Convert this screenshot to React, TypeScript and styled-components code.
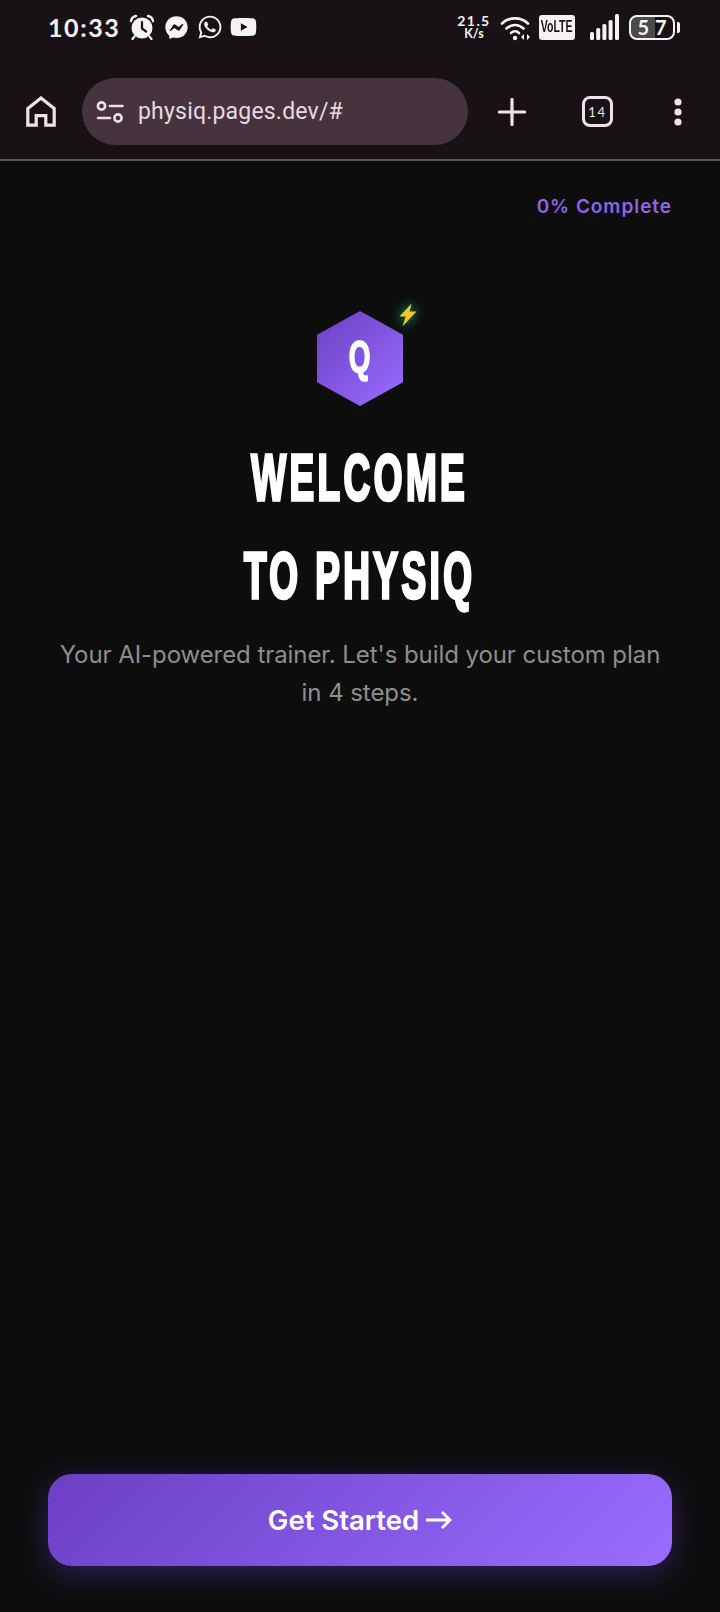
import React from 'react';
import styled, { createGlobalStyle } from 'styled-components';
import { FaFacebookMessenger, FaWhatsapp, FaYoutube } from 'react-icons/fa';

const Global = createGlobalStyle`
  html, body { margin: 0; padding: 0; background: #0d0d0d; }
  * { box-sizing: border-box; }
`;

const Page = styled.div`
  width: 720px;
  height: 1612px;
  display: flex;
  flex-direction: column;
  background: #0d0d0d;
  font-family: Inter, "Liberation Sans", sans-serif;
  overflow: hidden;
`;

const Chrome = styled.header`
  height: 161px;
  flex: none;
  background: #181216;
  border-bottom: 2px solid #5d5159;
  display: flex;
  flex-direction: column;
`;

const StatusBar = styled.div`
  height: 78px;
  padding: 13px 40px 0 48px;
  display: flex;
  align-items: flex-start;
  justify-content: space-between;
  color: #f5f2f4;
`;

const StatusGroup = styled.div`
  display: flex;
  align-items: center;
  height: 28px;
`;

const Time = styled.span`
  font-family: "Lato", sans-serif;
  font-weight: 700;
  font-size: 25px;
  letter-spacing: 1.6px;
  width: 81px;
  line-height: 28px;
`;

const NotifSlot = styled.span<{ $w: number }>`
  width: ${p => p.$w}px;
  display: flex;
  align-items: center;
  color: #f5f2f4;
`;

const Speed = styled.span`
  width: 40px;
  margin-left: -6px;
  margin-right: 6px;
  font-family: "Lato", sans-serif;
  font-weight: 700;
  font-size: 14px;
  line-height: 13px;
  text-align: center;
  letter-spacing: 1.4px;
  display: flex;
  flex-direction: column;
`;

const SpeedUnit = styled.span`
  font-size: 12.5px;
  letter-spacing: 0;
`;

const Volte = styled.span`
  width: 36px;
  height: 25px;
  background: #f5f2f4;
  color: #181216;
  border-radius: 3px;
  display: flex;
  align-items: center;
  justify-content: center;
  overflow: hidden;
`;

const VolteText = styled.span`
  display: inline-block;
  font-family: "Liberation Sans", sans-serif;
  font-weight: 700;
  font-size: 17px;
  transform: scaleX(0.62);
  letter-spacing: 0;
`;

const Battery = styled.span`
  position: relative;
  width: 46px;
  height: 25px;
  border: 2px solid #f5f2f4;
  border-radius: 8px;
  display: flex;
  align-items: center;
  justify-content: center;
  overflow: hidden;
  font-family: "Lato", sans-serif;
  font-weight: 700;
  font-size: 20px;
  letter-spacing: 6px;
  padding-left: 6px;
  background: linear-gradient(90deg, #4a4a4a 0 57%, transparent 57%);
`;

const BatteryCap = styled.span`
  width: 3px;
  height: 11px;
  margin-left: 2px;
  background: #f5f2f4;
  border-radius: 0 2px 2px 0;
`;

const Toolbar = styled.div`
  height: 67px;
  display: flex;
  align-items: center;
  padding-left: 26px;
`;

const Pill = styled.div`
  width: 386px;
  height: 67px;
  margin-left: 26px;
  border-radius: 34px;
  background: #46333e;
  display: flex;
  align-items: center;
  padding-left: 14px;
  gap: 14px;
  color: #e9dfe5;
`;

const Url = styled.span`
  font-family: "Roboto", sans-serif;
  font-size: 23px;
  letter-spacing: 0.2px;
  color: #e6dbe2;
`;

const ToolSlot = styled.div<{ $ml: number; $w: number }>`
  margin-left: ${p => p.$ml}px;
  width: ${p => p.$w}px;
  display: flex;
  justify-content: center;
  align-items: center;
`;

const TabBox = styled.div`
  width: 31px;
  height: 31px;
  border: 3px solid #eee3e9;
  border-radius: 8px;
  color: #eee3e9;
  font-family: "Lato", sans-serif;
  font-size: 13px;
  font-weight: 400;
  letter-spacing: 1.6px;
  display: flex;
  align-items: center;
  justify-content: center;
`;

const Main = styled.main`
  flex: 1;
  display: flex;
  flex-direction: column;
  align-items: center;
  padding: 0 48px 46px;
`;

const Progress = styled.div`
  align-self: flex-end;
  margin-top: 34px;
  font-size: 19px;
  line-height: 24px;
  font-weight: 600;
  letter-spacing: 0.95px;
  color: #8f64e6;
`;

const LogoWrap = styled.div`
  position: relative;
  width: 86px;
  height: 95px;
  margin-top: 92px;
`;

const Hexagon = styled.div`
  width: 100%;
  height: 100%;
  clip-path: polygon(50% 0, 100% 25%, 100% 75%, 50% 100%, 0 75%, 0 25%);
  background: linear-gradient(135deg, #6c3fc5, #9b6dff);
  display: flex;
  align-items: center;
  justify-content: center;
  padding-bottom: 4px;
`;

const HexLetter = styled.span`
  display: inline-block;
  color: #fff;
  font-family: "Liberation Sans", sans-serif;
  font-weight: 700;
  font-size: 45px;
  transform: scaleX(0.62);
  -webkit-text-stroke: 1.6px #fff;
`;

const BoltBadge = styled.svg`
  position: absolute;
  top: -8px;
  right: -15px;
  filter: drop-shadow(0 0 6px #00d070);
`;

const Title = styled.h1`
  margin: 23px 0 0;
  font-family: "Liberation Sans", sans-serif;
  font-weight: 700;
  font-size: 64px;
  line-height: 98px;
  letter-spacing: 6px;
  text-align: center;
  color: #fff;
  transform: scaleX(0.577);
  -webkit-text-stroke: 3.4px #fff;
`;

const Subtitle = styled.p`
  margin: 11px -10px 0;
  width: 620px;
  font-size: 24px;
  line-height: 38px;
  font-weight: 400;
  letter-spacing: -0.07px;
  text-align: center;
  color: #8e8e8e;
`;

const Spacer = styled.div`
  flex: 1;
`;

const Cta = styled.button`
  width: 624px;
  height: 92px;
  flex: none;
  border: 0;
  border-radius: 24px;
  background: linear-gradient(135deg, #6c3fc5, #9b6dff);
  box-shadow: 0 8px 32px rgba(124, 77, 255, 0.3);
  color: #fff;
  font-family: inherit;
  font-weight: 600;
  font-size: 27.5px;
  padding-bottom: 2px;
  display: flex;
  align-items: center;
  justify-content: center;
  gap: 7px;
`;

const AlarmIcon = () => (
  <svg width="26" height="26" viewBox="0 0 26 26" fill="none">
    <circle cx="13" cy="14" r="10.5" fill="#f5f2f4" />
    <path d="M13 8v6.5l4 3" stroke="#181216" strokeWidth="2.2" strokeLinecap="round" strokeLinejoin="round" />
    <path d="M2 7c.5-2.6 2.4-4.5 5-5M24 7c-.5-2.6-2.4-4.5-5-5" stroke="#f5f2f4" strokeWidth="2.4" strokeLinecap="round" />
    <path d="M5.5 22.5 3.5 25M20.5 22.5l2 2.5" stroke="#f5f2f4" strokeWidth="2.2" strokeLinecap="round" />
  </svg>
);

const WifiIcon = () => (
  <svg width="32" height="27" viewBox="0 0 32 27" fill="none" stroke="#f5f2f4" strokeLinecap="round">
    <path d="M2 9.5C9 2.6 21 2.6 28 9.5" strokeWidth="2.6" />
    <path d="M6.5 14.5c5-4.6 12-4.6 17 0" strokeWidth="2.6" />
    <path d="M11 19c2.7-2.2 5.6-2.2 8 0" strokeWidth="2.6" />
    <circle cx="15" cy="24" r="2.2" fill="#f5f2f4" stroke="none" />
    <path d="M24 20v6l-3-3zM27 20v6l3-3z" fill="#f5f2f4" stroke="none" />
  </svg>
);

const SignalIcon = () => (
  <svg width="29" height="26" viewBox="0 0 29 26" fill="#f5f2f4">
    <rect x="0" y="18" width="4" height="8" rx="1.5" />
    <rect x="6.2" y="14" width="4" height="12" rx="1.5" />
    <rect x="12.4" y="10" width="4" height="16" rx="1.5" />
    <rect x="18.6" y="6" width="4" height="20" rx="1.5" />
    <rect x="25" y="0" width="4" height="26" rx="1.5" />
  </svg>
);

const HomeIcon = () => (
  <svg width="30" height="31" viewBox="0 0 30 31" fill="none" stroke="#eee3e9" strokeWidth="3.2" strokeLinejoin="miter">
    <path d="M1.8 29.2V12.6L15 2l13.2 10.6v16.6h-8.4v-9.6h-9.6v9.6z" />
  </svg>
);

const TuneIcon = () => (
  <svg width="28" height="22" viewBox="0 0 28 22" fill="none" stroke="#e9dfe5" strokeWidth="2.6" strokeLinecap="round">
    <circle cx="5.5" cy="5" r="3.6" />
    <path d="M14 5h12.5" />
    <path d="M2 17h12" />
    <circle cx="22" cy="17" r="3.6" />
  </svg>
);

const PlusIcon = () => (
  <svg width="28" height="28" viewBox="0 0 28 28" stroke="#eee3e9" strokeWidth="3.2" strokeLinecap="round">
    <path d="M14 1.5v25M1.5 14h25" />
  </svg>
);

const MoreIcon = () => (
  <svg width="8" height="28" viewBox="0 0 8 28" fill="#eee3e9">
    <circle cx="4" cy="4" r="3.6" />
    <circle cx="4" cy="14" r="3.6" />
    <circle cx="4" cy="24" r="3.6" />
  </svg>
);

const BoltIcon = () => (
  <BoltBadge width="20" height="24" viewBox="0 0 20 24">
    <path d="M13.5 0.5 1.5 13.5h6.2L4.5 23.5 18.5 8.5h-6.8z" fill="#f7c61f" />
  </BoltBadge>
);

const ArrowIcon = () => (
  <svg width="26" height="20" viewBox="0 0 26 20" fill="none" stroke="#fff" strokeWidth="2.8">
    <path d="M0 10h24M16 2l8 8-8 8" strokeLinejoin="miter" />
  </svg>
);

export default function App() {
  return (
    <Page>
      <Global />
      <Chrome>
        <StatusBar>
          <StatusGroup>
            <Time>10:33</Time>
            <NotifSlot $w={36}><AlarmIcon /></NotifSlot>
            <NotifSlot $w={32}><FaFacebookMessenger size={23} /></NotifSlot>
            <NotifSlot $w={33}><FaWhatsapp size={26} /></NotifSlot>
            <NotifSlot $w={27}><FaYoutube size={28} /></NotifSlot>
          </StatusGroup>
          <StatusGroup>
            <Speed>21.5<SpeedUnit>K/s</SpeedUnit></Speed>
            <NotifSlot $w={39}><WifiIcon /></NotifSlot>
            <Volte><VolteText>VoLTE</VolteText></Volte>
            <NotifSlot $w={15} />
            <NotifSlot $w={39}><SignalIcon /></NotifSlot>
            <Battery>57</Battery>
            <BatteryCap />
          </StatusGroup>
        </StatusBar>
        <Toolbar>
          <HomeIcon />
          <Pill>
            <TuneIcon />
            <Url>physiq.pages.dev/#</Url>
          </Pill>
          <ToolSlot $ml={30} $w={28}><PlusIcon /></ToolSlot>
          <ToolSlot $ml={56} $w={31}><TabBox>14</TabBox></ToolSlot>
          <ToolSlot $ml={61} $w={8}><MoreIcon /></ToolSlot>
        </Toolbar>
      </Chrome>
      <Main>
        <Progress>0% Complete</Progress>
        <LogoWrap>
          <Hexagon><HexLetter>Q</HexLetter></Hexagon>
          <BoltIcon />
        </LogoWrap>
        <Title>WELCOME<br />TO PHYSIQ</Title>
        <Subtitle>Your AI-powered trainer. Let's build your custom plan in 4 steps.</Subtitle>
        <Spacer />
        <Cta>Get Started <ArrowIcon /></Cta>
      </Main>
    </Page>
  );
}
